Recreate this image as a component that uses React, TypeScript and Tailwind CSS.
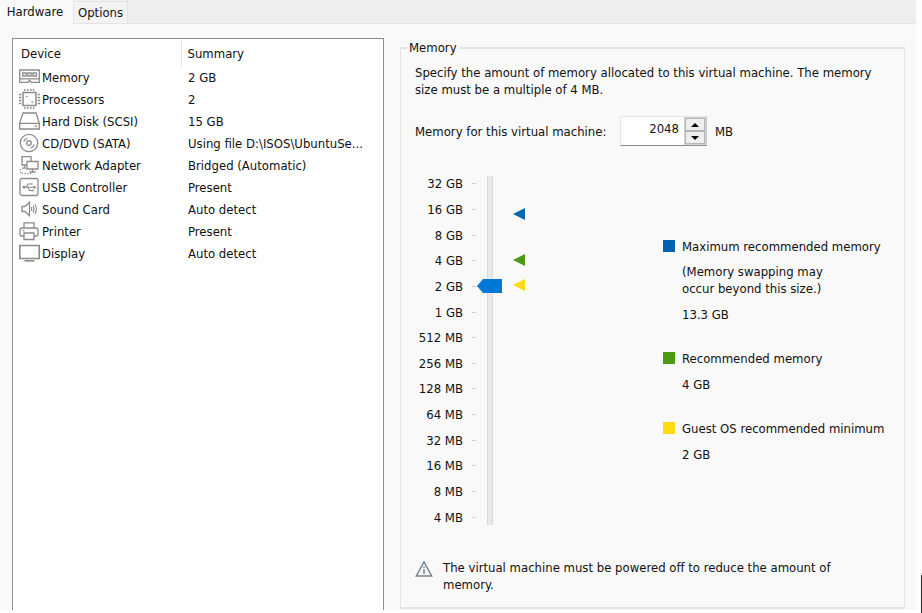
import { useState, type ReactNode } from "react";

function Icon({ children }: { children: ReactNode }) {
  return (
    <svg
      aria-hidden="true"
      viewBox="0 0 21 20"
      className="h-5 w-[21px] shrink-0"
      fill="none"
      stroke="#8c8c8c"
      strokeWidth="1.3"
    >
      {children}
    </svg>
  );
}

const MemoryIcon = () => (
  <Icon>
    <path d="M.7 3h19.600v12.300H12.200l-1.700-1.800-1.700 1.800H.7z M1 11.800h19" />
    <path d="M3.700 6h3.400v3H3.700z M8.800 6h3.400v3H8.800z M13.900 6h3.400v3h-3.400z" />
  </Icon>
);

const ProcessorIcon = () => (
  <Icon>
    <path d="M4 3.500h13v13H4z" strokeWidth="1.500" />
    <path
      d="M5.800 0v2 M8.800 0v2 M11.800 0v2 M14.800 0v2 M5.800 18v2 M8.800 18v2 M11.800 18v2 M14.800 18v2 M0 5.500h2.300 M0 8.500h2.300 M0 11.500h2.300 M0 14.500h2.300 M18.700 5.500H21 M18.700 8.500H21 M18.700 11.500H21 M18.700 14.500H21"
    />
    <path d="M7 7.500h1.500 M12.500 13h1.500" strokeWidth="1.500" />
  </Icon>
);

const DiskIcon = () => (
  <Icon>
    <path d="M4 2h13l3.300 10v6H.7v-6z M.7 12.300h19.600 M15.500 15.200h2.500" />
  </Icon>
);

const DiscIcon = () => (
  <Icon>
    <circle cx="10" cy="10" r="8.7" />
    <circle cx="10" cy="10" r="2.3" />
    <path d="M4.800 8.500A5.400 5.400 0 0 1 8.300 5 M15.200 11.500a5.400 5.400 0 0 1-3.500 3.500" />
  </Icon>
);

const NetworkIcon = () => (
  <Icon>
    <path d="M7.500 10H3V1.700h9V6 M8 6.500h11v7.500H8z M13.500 14v2.500 M10.500 17h6 M5.500 10v3 M3 13.200h4" />
    <path d="M1.500 14v4.500H13" strokeDasharray="1.2 1.6" />
  </Icon>
);

const UsbIcon = () => (
  <Icon>
    <rect x="1" y="1.5" width="18" height="17" rx="2" />
    <path d="M4 10.300h12 M7.200 10l2-3h2.500 M9 10.500l1.500 3h3" strokeWidth="1.1" />
    <circle cx="5" cy="10.3" r=".8" fill="#8c8c8c" />
    <path d="M11.500 6.900h2 M13 13.500h2 M14.700 9l1.600 1.300-1.600 1.300" />
  </Icon>
);

const SoundIcon = () => (
  <Icon>
    <path d="M3 7.500h3l4.500-4.200v13.400L6 12.500H3z" />
    <path d="M12.300 8q1 2 0 4 M14 6.500q2 3.500 0 7 M15.900 5q2.800 5 0 10" strokeWidth="1.1" />
  </Icon>
);

const PrinterIcon = () => (
  <Icon>
    <path d="M5 7V1.800h10V7 M5 15H2.500A1.500 1.500 0 0 1 1 13.500V9a2 2 0 0 1 2-2h14a2 2 0 0 1 2 2v4.500a1.500 1.500 0 0 1-1.500 1.500H15 M5 12h10v6.500H5z M3.500 9.700h2" />
  </Icon>
);

const DisplayIcon = () => (
  <Icon>
    <path d="M.8 2.500h19.400v13H.8z" strokeWidth="1.600" />
    <path d="M5.500 17.800h10" strokeWidth="1.600" />
  </Icon>
);

const devices = [
  { name: "Memory", summary: "2 GB", icon: MemoryIcon },
  { name: "Processors", summary: "2", icon: ProcessorIcon },
  { name: "Hard Disk (SCSI)", summary: "15 GB", icon: DiskIcon },
  { name: "CD/DVD (SATA)", summary: "Using file D:\\ISOS\\UbuntuSe...", icon: DiscIcon },
  { name: "Network Adapter", summary: "Bridged (Automatic)", icon: NetworkIcon },
  { name: "USB Controller", summary: "Present", icon: UsbIcon },
  { name: "Sound Card", summary: "Auto detect", icon: SoundIcon },
  { name: "Printer", summary: "Present", icon: PrinterIcon },
  { name: "Display", summary: "Auto detect", icon: DisplayIcon },
];

const sizes = [
  "32 GB", "16 GB", "8 GB", "4 GB", "2 GB", "1 GB", "512 MB",
  "256 MB", "128 MB", "64 MB", "32 MB", "16 MB", "8 MB", "4 MB",
];

function DeviceList() {
  return (
    <div className="w-[372px] shrink-0 border border-b-0 border-[#8a8f99] bg-white pt-px">
      <table className="w-full table-fixed border-collapse text-left">
        <thead>
          <tr className="h-[26px]">
            <th className="w-[168px] border-r border-[#e2e2e2] py-0 pl-2 font-normal">Device</th>
            <th className="py-0 pl-[6px] font-normal">Summary</th>
          </tr>
        </thead>
        <tbody>
          {devices.map(({ name, summary, icon: DeviceIcon }) => (
            <tr key={name} className="h-[22px]">
              <td className="p-0 pl-[6px]">
                <span className="flex h-[22px] items-center gap-[2px] whitespace-nowrap">
                  <DeviceIcon />
                  {name}
                </span>
              </td>
              <td className="truncate p-0 pl-[7px]">{summary}</td>
            </tr>
          ))}
        </tbody>
      </table>
    </div>
  );
}

function MemorySpinner({ value, onChange }: { value: number; onChange: (v: number) => void }) {
  const button =
    "flex flex-1 items-center justify-center border border-[#b4b4b4] bg-[#efefef]";
  return (
    <div className="flex h-[30px] w-[87px] border border-[#e4e4e4] border-r-[#c4c4c4] border-b-[#8c8c8c] bg-white">
      <input
        id="memory-size"
        type="text"
        inputMode="numeric"
        value={value}
        onChange={(e) => onChange(Number(e.target.value) || 0)}
        className="min-w-0 flex-1 bg-transparent pr-[5px] pb-[5px] text-right outline-none"
      />
      <div className="flex w-[22px] flex-col bg-[#d4d4d4] p-px">
        <button type="button" aria-label="Increase memory" className={button} onClick={() => onChange(value + 4)}>
          <svg viewBox="0 0 8 4" className="h-1 w-2"><path d="M0 4 4 0l4 4z" /></svg>
        </button>
        <button type="button" aria-label="Decrease memory" className={button} onClick={() => onChange(Math.max(4, value - 4))}>
          <svg viewBox="0 0 8 4" className="h-1 w-2"><path d="M0 0h8L4 4z" /></svg>
        </button>
      </div>
    </div>
  );
}

function MemoryScale({ value, onChange }: { value: number; onChange: (v: number) => void }) {
  return (
    <div className="flex h-[359px] items-center">
      <ul className="flex h-full w-[61px] flex-col">
        {sizes.map((size) => (
          <li key={size} className="flex flex-1 items-center justify-end gap-[9px] whitespace-nowrap">
            {size}
            <span className="h-px w-1 bg-[#cfcfcf]" />
          </li>
        ))}
      </ul>
      <input
        type="range"
        aria-label="Memory size"
        min={0}
        max={13}
        value={Math.log2(Math.max(4, value)) - 2}
        step="any"
        onChange={(e) => onChange(4 * 2 ** Math.round(Number(e.target.value)))}
        className="ml-px h-[349px] w-[26px] appearance-none bg-[linear-gradient(to_right,#d6d9d9_1px,#e7eaea_1px,#e7eaea_5px,#d6d9d9_5px)] bg-[length:6px_100%] bg-center bg-no-repeat [direction:rtl] [writing-mode:vertical-lr] [&::-webkit-slider-thumb]:h-[14px] [&::-webkit-slider-thumb]:w-[26px] [&::-webkit-slider-thumb]:appearance-none [&::-webkit-slider-thumb]:bg-[#0078d7] [&::-webkit-slider-thumb]:[clip-path:polygon(0_50%,6px_0,25px_0,25px_100%,6px_100%)]"
      />
      <svg viewBox="0 0 12 349" aria-hidden="true" className="ml-[10px] h-[349px] w-3">
        <path d="M0 38 12 32v12z" fill="#0a66ad" />
        <path d="M0 84 12 78v12z" fill="#4a9a12" />
        <path d="M0 109 12 103v12z" fill="#fddb10" />
      </svg>
    </div>
  );
}

function Legend() {
  return (
    <dl className="ml-auto flex w-[228px] flex-col gap-[27px] whitespace-nowrap pt-[67px]">
      <div>
        <dt className="flex items-start gap-[7px]">
          <span className="mt-[2px] size-3 bg-[#0063b1]" />
          Maximum recommended memory
        </dt>
        <dd className="mt-2 pl-[19px]">
          (Memory swapping may
          <br />
          occur beyond this size.)
        </dd>
        <dd className="mt-[9px] pl-[19px]">13.3 GB</dd>
      </div>
      <div>
        <dt className="flex items-start gap-[7px]">
          <span className="mt-[2px] size-3 bg-[#4a9a12]" />
          Recommended memory
        </dt>
        <dd className="mt-[9px] pl-[19px]">4 GB</dd>
      </div>
      <div>
        <dt className="flex items-start gap-[7px]">
          <span className="mt-[2px] size-3 bg-[#fddb10]" />
          Guest OS recommended minimum
        </dt>
        <dd className="mt-[9px] pl-[19px]">2 GB</dd>
      </div>
    </dl>
  );
}

export default function App() {
  const [memory, setMemory] = useState(2048);
  return (
    <div className="flex bg-white font-['DejaVu_Sans_Condensed','DejaVu_Sans',sans-serif] text-[13px] leading-[17px] text-[#111]">
      <div className="mb-[3px] min-w-0 flex-1 bg-[#f9f9f9]">
        <div role="tablist" className="flex h-6 bg-[#efefef]">
          <button role="tab" aria-selected="true" className="w-[73px] bg-[#f9f9f9] pr-[3px] pb-[2px]">
            Hardware
          </button>
          <button
            role="tab"
            aria-selected="false"
            className="mt-px w-[55px] border border-[#e4e4e4] bg-[#f3f3f3]"
          >
            Options
          </button>
          <div className="flex-1 border-b border-[#e4e4e4]" />
        </div>
        <main className="flex pl-3">
          <div className="flex pt-[14px]">
            <DeviceList />
          </div>
          <fieldset className="mt-[15px] mr-[11px] mb-px ml-4 min-w-0 flex-1 border border-t-2 border-b-2 border-[#e4e4e4] pr-[13px] pl-[14px]">
            <legend className="-ml-2 px-[2px]">Memory</legend>
            <p className="mt-2">
              Specify the amount of memory allocated to this virtual machine. The memory size must be a
              multiple of 4 MB.
            </p>
            <div className="mt-[18px] flex items-center">
              <label htmlFor="memory-size" className="w-[205px] whitespace-nowrap">
                Memory for this virtual machine:
              </label>
              <MemorySpinner value={memory} onChange={setMemory} />
              <span className="ml-2">MB</span>
            </div>
            <div className="mt-[25px] flex">
              <MemoryScale value={memory} onChange={setMemory} />
              <Legend />
            </div>
            <div className="mt-[29px] mb-[14px] flex gap-[10px] pr-10">
              <svg
                aria-hidden="true"
                viewBox="0 0 18 17"
                className="mt-px h-[17px] w-[18px] shrink-0"
                fill="none"
                stroke="#74838f"
                strokeWidth="1.5"
              >
                <path d="M9 2 16.700 16H1.300z M9 6.500v1.500 M9 9v5" />
              </svg>
              <p>The virtual machine must be powered off to reduce the amount of memory.</p>
            </div>
          </fieldset>
        </main>
      </div>
      <div className="flex w-[6px] items-end justify-end bg-[#fdfdfd]">
        <div className="h-[38px] w-px bg-[#222]" />
      </div>
    </div>
  );
}
